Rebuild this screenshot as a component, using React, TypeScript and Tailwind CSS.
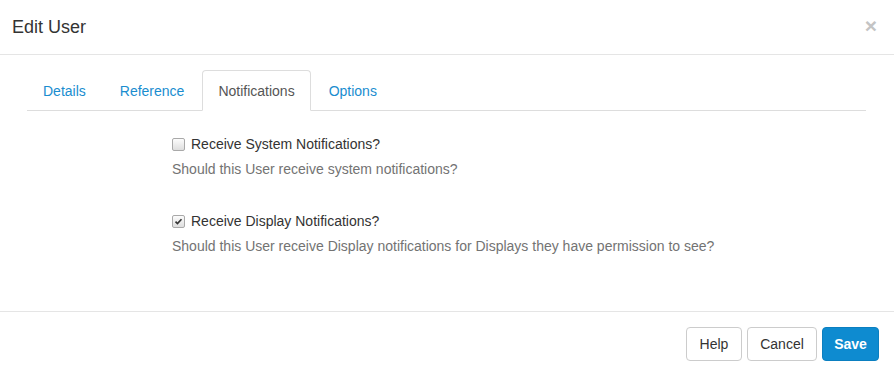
import React from "react";

function Check({ checked }: { checked?: boolean }) {
  return (
    <span className="inline-flex w-[13px] h-[13px] shrink-0 items-center justify-center rounded-[2px] border border-[#a9a9a9] bg-gradient-to-b from-[#fcfcfc] to-[#dedede]">
      {checked && (
        <svg viewBox="0 0 12 12" className="w-[9px] h-[9px]">
          <path d="M2 6.2 L4.6 8.8 L10 3" fill="none" stroke="#333" strokeWidth="2.2" />
        </svg>
      )}
    </span>
  );
}

export default function App() {
  const tabs = ["Details", "Reference", "Notifications", "Options"];
  return (
    <div className="w-[894px] h-[373px] overflow-hidden bg-white font-['Liberation_Sans',Arial,sans-serif] text-[14px] text-[#333]">
      {/* Header */}
      <div className="h-[55px] flex items-center justify-between pl-[12px] pr-[17px] border-b border-[#e5e5e5]">
        <h4 className="text-[18px] leading-[26px] text-[#333]">Edit User</h4>
        <span className="text-[21px] font-bold leading-none text-[#c4c4c4] -mt-[4px]">×</span>
      </div>

      {/* Body */}
      <div className="h-[256px] pt-[15px] px-[27px] pr-[28px]">
        <ul className="flex h-[41px] border-b border-[#ddd]">
          {tabs.map((t) => (
            <li key={t} className="mr-[2px] -mb-px">
              {t === "Notifications" ? (
                <span className="block h-[41px] px-[15px] leading-[40px] rounded-t-[4px] border border-[#ddd] border-b-white bg-white text-[#555]">
                  {t}
                </span>
              ) : (
                <span className="block h-[41px] px-[15px] leading-[40px] border border-transparent text-[#1a8dcf]">
                  {t}
                </span>
              )}
            </li>
          ))}
        </ul>

        <div className="pl-[145px] pt-[23px]">
          <label className="flex items-center gap-[6px] h-[20px] leading-[20px]">
            <Check />
            <span>Receive System Notifications?</span>
          </label>
          <p className="mt-[5px] leading-[20px] text-[#737373]">Should this User receive system notifications?</p>

          <label className="mt-[32px] flex items-center gap-[6px] h-[20px] leading-[20px]">
            <Check checked />
            <span>Receive Display Notifications?</span>
          </label>
          <p className="mt-[5px] leading-[20px] text-[#737373]">
            Should this User receive Display notifications for Displays they have permission to see?
          </p>
        </div>
      </div>

      {/* Footer */}
      <div className="border-t border-[#e5e5e5] pt-[15px] pr-[15px] flex justify-end gap-[5px]">
        <button className="h-[34px] w-[56px] rounded-[4px] border border-[#ccc] bg-white text-[#333]">Help</button>
        <button className="h-[34px] w-[70px] rounded-[4px] border border-[#ccc] bg-white text-[#333]">Cancel</button>
        <button className="h-[34px] w-[57px] rounded-[4px] border border-[#0b7fc0] bg-[#0e8bd0] text-white font-bold">Save</button>
      </div>
    </div>
  );
}
